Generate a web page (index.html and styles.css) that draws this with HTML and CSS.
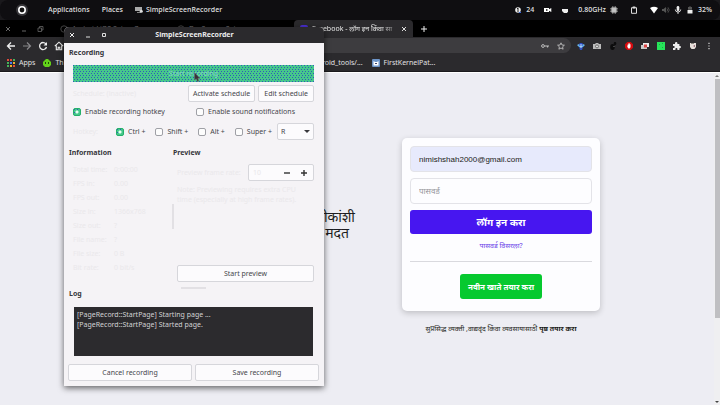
FILE: index.html
```
<!DOCTYPE html>
<html lang="mr">
<head>
<meta charset="utf-8">
<title>Facebook - लॉग इन किंवा साइन अप करा</title>
<link rel="stylesheet" href="styles.css">
</head>
<body>
<header class="panel" lang="en">
  <svg class="logo" viewBox="0 0 12 12"><circle cx="6" cy="6" r="6" fill="#38373b"/><circle cx="6" cy="6" r="3.2" fill="#111" stroke="#fff" stroke-width="1.6"/></svg>
  <span class="menu">Applications</span>
  <span class="menu">Places</span>
  <span class="menu running"><svg class="i8" viewBox="0 0 8 8"><path d="M0 1h7v4H0z" fill="#aaa"/><path d="M2 6h4v1H2z" fill="#888"/><circle cx="6.3" cy="5.3" r="1.5" fill="#ddd"/></svg>SimpleScreenRecorder</span>
  <div class="status">
    <svg class="i8" viewBox="0 0 8 8"><circle cx="4" cy="4" r="2.8" fill="#eee"/><path d="M4 2v4M3 3l1-1" stroke="#222"/><path d="M5 6h2v1H5z" fill="#3565e8"/></svg>
    <span class="count">24</span>
    <svg class="i8 cam" viewBox="0 0 8 8"><path d="M0 2h5v1.2L7.3 2v4L5 4.8V6H0z" fill="#fff"/><path d="M2 3.3h1.5v1.4H2z" fill="#111"/></svg>
    <svg class="i8 cup" viewBox="0 0 8 8"><path d="M1 3h6v2.5L6 7H3L1 5z" fill="#eee"/></svg>
    <span class="ghz">0.80GHz</span>
    <svg class="i8" viewBox="0 0 8 8"><path d="M1.4 1.4h5.2v5.2H1.4z" fill="#ccc"/><path d="M2.5 0v8M4 0v8M5.5 0v8M0 2.5h8M0 4h8M0 5.5h8" stroke="#bbb" stroke-width=".5"/></svg>
    <svg class="i8 clip" viewBox="0 0 8 8"><path d="M1.5 1.7h5v5.6h-5z" fill="none" stroke="#ddd"/><path d="M2.7.5h2.6v2H2.7z" fill="#ddd"/></svg>
    <svg class="i8 wifi" viewBox="0 0 8 8"><path d="M0 2Q4-.5 8 2L4 7.4z" fill="#fff"/></svg>
    <svg class="i8" viewBox="0 0 8 8"><path d="M0 3h1.5L4 1v6L1.500 5H0z" fill="#555"/><path d="M5 2.5q1.300 1.500 0 3M6 1.300q2.500 2.700 0 5.400" fill="none" stroke="#555" stroke-width=".8"/></svg>
    <svg class="i8 mic" viewBox="0 0 8 8"><rect x="2.700" y="0" width="2.600" height="5" rx="1.300" fill="#eee"/><path d="M1.300 3.500q0 2.500 2.700 2.500t2.700-2.500M4 6v2" fill="none" stroke="#eee" stroke-width=".9"/></svg>
    <svg class="i8" viewBox="0 0 8 8"><path d="M2 1h1V.4h2V1h1v2.700H2z" fill="#555"/><path d="M1.500 4h5v3.500h-5z" fill="#eee"/></svg>
    <span>32%</span>
  </div>
</header>

<nav class="tabs">
  <div class="wm">
    <svg class="i8" viewBox="0 0 8 8"><path d="M2 2l4 4M6 2l-4 4" stroke="#777" stroke-width=".9"/></svg>
    <svg class="i8" viewBox="0 0 8 8"><path d="M2 6h4" stroke="#666"/></svg>
    <svg class="i8" viewBox="0 0 8 8"><path d="M2 3h3.500v3.500H2zM3.500 3V1.500H7V5H5.500" fill="none" stroke="#666" stroke-width=".8"/></svg>
  </div>
  <div class="tab back"><svg class="i8" viewBox="0 0 8 8"><circle cx="4" cy="4" r="3.200" fill="none" stroke="#444"/></svg>Android iOS Setup Guru</div>
  <div class="tab back"><svg class="i8" viewBox="0 0 8 8"><circle cx="4" cy="4" r="3.200" fill="none" stroke="#444"/></svg>DevSource Setup</div>
  <div class="tab active"><svg class="i8" viewBox="0 0 8 8"><rect width="8" height="8" rx="2" fill="#4a2fd0"/></svg><span class="tabname">Facebook - लॉग इन किंवा सा</span>
    <button class="plain" aria-label="Close tab"><svg viewBox="0 0 6 6"><path d="M1 1l4 4M5 1L1 5" stroke="#ddd"/></svg></button></div>
  <button class="plain add" aria-label="New tab"><svg viewBox="0 0 6 6"><path d="M3 0v6M0 3h6" stroke="#eee"/></svg></button>
</nav>

<div class="toolbar">
  <button class="tool" aria-label="Back"><svg viewBox="0 0 10 10"><path d="M9 5H2M5 1.500L1.500 5 5 8.500" fill="none" stroke="#eee" stroke-width="1.300"/></svg></button>
  <button class="tool" aria-label="Forward"><svg viewBox="0 0 10 10"><path d="M1 5h7M5 1.500L8.500 5 5 8.500" fill="none" stroke="#88878a" stroke-width="1.200"/></svg></button>
  <button class="tool" aria-label="Reload"><svg viewBox="0 0 10 10"><path d="M8 3A3.500 3.500 0 1 0 8.500 6" fill="none" stroke="#eee" stroke-width="1.300"/><path d="M9 1v3.500H5.500z" fill="#eee"/></svg></button>
  <button class="tool" aria-label="Home"><svg viewBox="0 0 10 10"><path d="M.8 5.200L5 1.200l4.200 4M2.300 4.500v4.300h1.900V6.300h1.600v2.500h1.900V4.500" fill="none" stroke="#eee" stroke-width="1.100"/></svg></button>
  <div class="url">
    <svg class="i8" viewBox="0 0 8 8"><circle cx="2" cy="4" r="1.400" fill="none" stroke="#bbb"/><path d="M3.400 4H8M6.500 4v1.600" stroke="#bbb" stroke-width="1.200"/></svg>
    <svg class="i8" viewBox="0 0 8 8"><path d="M4 .8l1 2.200 2.400.2-1.800 1.600.5 2.400L4 6 1.900 7.200l.5-2.400L.6 3.200 3 3z" fill="none" stroke="#ccc" stroke-width=".8"/></svg>
  </div>
  <div class="ext">
    <svg class="i8" viewBox="0 0 8 8"><path d="M0 3l2-1 2 1 2-1 2 1-2 2H2z" fill="#68b5ec"/><path d="M2.500 1h3v3h-3z" fill="#2949c8"/><path d="M2 5h4L5 8H3z" fill="#3050bb"/><path d="M3.500 2h1v4h-1z" fill="#cfe8fa"/></svg>
    <svg class="i8" viewBox="0 0 8 8"><path d="M0 2h2l1-1h2l1 1h2v5H0z" fill="#bbb"/><circle cx="4" cy="4.400" r="1.500" fill="#ddd" stroke="#555" stroke-width=".8"/></svg>
    <svg class="i8" viewBox="0 0 8 8"><ellipse cx="3.500" cy="5" rx="2.300" ry="3" fill="#0c0c0d"/><ellipse cx="6" cy="1.600" rx="1.300" ry="1.700" fill="#0c0c0d"/><path d="M4 4h2v1H4z" fill="#444"/></svg>
    <svg class="i8" viewBox="0 0 8 8"><path d="M2.300 0h3.400L8 2.300v3.400L5.700 8H2.300L0 5.700V2.300z" fill="#d40b0f"/><path d="M2.700 2.500h.8V1.300h1.200v1h.8v3L4.700 6.500H3.300L2.300 4.700z" fill="#fff"/></svg>
    <svg class="i8" viewBox="0 0 8 8"><path d="M2 1h6v4H2z" fill="#eee"/><path d="M0 3h6v4H0z" fill="#ccc"/><path d="M3 2.500h3v3H3z" fill="#d44"/></svg>
    <svg class="i8" viewBox="0 0 8 8"><path d="M0 0h8v8H0z" fill="#27e45a"/><path d="M2 2h1v1H2zM5 5h1v1H5zM5 1h1v1H5z" fill="#18a840"/></svg>
    <svg class="i8" viewBox="0 0 8 8"><path d="M0 2h2V1.200a1.200 1.200 0 0 1 2.400 0V2h2v2h.5a1.100 1.100 0 0 1 0 2.200h-.5V8h-2V7a1 1 0 0 0-2 0v1H0V6h.7a1 1 0 0 0 0-2H0z" fill="#eee"/></svg>
    <svg class="i8" viewBox="0 0 8 8"><path d="M1 1h6v4L5.500 7h-3L1 5z" fill="#e6dfda"/><path d="M2 1h3v1H2z" fill="#86827d"/><path d="M4 4l2-1v2z" fill="#8a5a6a"/></svg>
    <svg class="i8" viewBox="0 0 8 8"><path d="M3.400.8h1.200V2H3.400zM3.400 3.400h1.200v1.200H3.400zM3.400 6h1.200v1.200H3.400z" fill="#ddd"/></svg>
  </div>
</div>

<div class="bookmarks" lang="en">
  <a href="#apps"><svg class="i8" viewBox="0 0 8 8"><path d="M0 0h2v2H0zM3 0h2v2H3z" fill="#e04a3c"/><path d="M6 0h2v2H6zM0 3h2v2H0z" fill="#45b35b"/><path d="M3 3h2v2H3z" fill="#4b7df0"/><path d="M6 3h2v2H6zM3 6h2v2H3z" fill="#f0b02c"/><path d="M0 6h2v2H0z" fill="#45b35b"/><path d="M6 6h2v2H6z" fill="#e04a3c"/></svg>Apps</a>
  <a href="#th" class="second"><svg class="i8" viewBox="0 0 8 8"><path d="M1 2l2-2h2l2 2 1 1v3L6 8H2L0 6V3z" fill="#63d21a"/><path d="M2 3h1v2H2zM5 3h1v2H5z" fill="#1c4a08"/></svg>Th</a>
  <div class="more">
    <a href="#tools">android_tools/...</a>
    <a href="#kernel"><svg class="i8" viewBox="0 0 8 8"><rect width="8" height="8" rx="1" fill="#6d95c8"/><path d="M1.500 2l1.500 1h2l1.500-1v4.500h-5z" fill="#fff"/><path d="M3 4h2v1H3z" fill="#446"/></svg>FirstKernelPat...</a>
  </div>
</div>

<main class="page">
  <p class="hero"><span>लोकांशी</span><span class="end">मदत</span></p>
  <div class="login">
    <form class="card">
      <input class="field filled" type="text" aria-label="ईमेल" value="nimishshah2000@gmail.com">
      <input class="field" type="password" aria-label="पासवर्ड" placeholder="पासवर्ड">
      <button class="signin" type="button">लॉग इन करा</button>
      <a class="forgot" href="#forgot">पासवर्ड विसरला?</a>
      <hr>
      <button class="create" type="button">नवीन खाते तयार करा</button>
    </form>
    <p class="foot">सुप्रसिद्ध व्यक्ती ,वाद्यवृंद किंवा व्यवसायासाठी <a href="#page">पृष्ठ तयार करा</a></p>
  </div>
  <div class="scroll"><svg viewBox="0 0 6 6"><path d="M1 4l2-2 2 2z" fill="#777"/></svg><i class="thumb"></i><svg viewBox="0 0 6 6"><path d="M1 2l2 2 2-2z" fill="#444"/></svg></div>
</main>

<section class="window" lang="en" aria-label="SimpleScreenRecorder">
  <div class="title">
    <button class="plain" aria-label="Close"><svg viewBox="0 0 6 6"><path d="M1 1l4 4M5 1L1 5" stroke="#eee"/></svg></button>
    <button class="plain" aria-label="Minimize"><svg viewBox="0 0 6 6"><path d="M1 5h4" stroke="#ddd"/></svg></button>
    <button class="plain" aria-label="Maximize"><svg viewBox="0 0 6 6"><path d="M1.500 1.500h3v3h-3z" fill="none" stroke="#ddd"/></svg></button>
    <strong>SimpleScreenRecorder</strong>
  </div>
  <div class="body">
    <h2>Recording</h2>
    <div class="inset">
      <button class="start dither">Start recording</button>
      <div class="row sched"><span class="faint grow">Schedule: (inactive)</span><button class="btn">Activate schedule</button><button class="btn wide">Edit schedule</button></div>
      <div class="row checks">
        <label class="half"><input type="checkbox" checked>Enable recording hotkey</label>
        <label><input type="checkbox">Enable sound notifications</label>
      </div>
      <div class="row keys">
        <span class="faint grow">Hotkey:</span>
        <label><input type="checkbox" checked>Ctrl +</label>
        <label><input type="checkbox">Shift +</label>
        <label><input type="checkbox">Alt +</label>
        <label><input type="checkbox">Super +</label>
        <span class="pick"><select aria-label="Key"><option>R</option></select></span>
      </div>
    </div>
    <div class="split">
      <div class="info">
        <h2>Information</h2>
        <dl class="faint">
          <dt>Total time:</dt><dd>0:00:00</dd>
          <dt>FPS in:</dt><dd>0.00</dd>
          <dt>FPS out:</dt><dd>0.00</dd>
          <dt>Size in:</dt><dd>1366x768</dd>
          <dt>Size out:</dt><dd>?</dd>
          <dt>File name:</dt><dd>?</dd>
          <dt>File size:</dt><dd>0 B</dd>
          <dt>Bit rate:</dt><dd>0 bit/s</dd>
        </dl>
      </div>
      <i class="grip"></i>
      <div class="preview">
        <h2>Preview</h2>
        <div class="pin">
          <div class="row"><label class="faint grow" for="rate">Preview frame rate:</label>
            <span class="spin"><input id="rate" type="text" value="10"><button class="plain" aria-label="Less"><svg viewBox="0 0 6 6"><path d="M0 3h6" stroke="#333" stroke-width="1.400"/></svg></button><button class="plain" aria-label="More"><svg viewBox="0 0 6 6"><path d="M3 0v6M0 3h6" stroke="#333" stroke-width="1.400"/></svg></button></span></div>
          <p class="faint note">Note: Previewing requires extra CPU<br>time (especially at high frame rates).</p>
          <button class="btn full">Start preview</button>
        </div>
      </div>
    </div>
    <i class="hgrip"></i>
    <h2>Log</h2>
    <div class="log">[PageRecord::StartPage] Starting page ...<br>[PageRecord::StartPage] Started page.</div>
    <div class="row foot-buttons"><button class="btn full">Cancel recording</button><button class="btn full">Save recording</button></div>
  </div>
  <svg class="pointer" viewBox="0 0 6 10"><path d="M.5.5v7.500l1.700-1.300L3.500 9.500l1.300-.7-1-2.500h2z" fill="#3b3338" stroke="#6d6a70" stroke-width=".5"/></svg>
</section>
</body>
</html>
```
FILE: styles.css
```
* { box-sizing: border-box; margin: 0; }
body {
  display: flex; flex-direction: column; height: 100vh; overflow: hidden; position: relative;
  font: 7px/10px "Noto Sans", "Open Sans", "Noto Sans Devanagari", sans-serif; color: #46464b; background: #000;
}
svg { display: block; flex: none; }
button, input, select { font: inherit; color: inherit; }
button { padding: 0; border: 0; background: none; }
a { color: inherit; text-decoration: none; }
.i8 { width: 8px; height: 8px; }
.plain svg { width: 6px; height: 6px; }

.panel {
  display: flex; align-items: center; height: 20px; padding: 0 8px 0 16px; flex: none;
  background: #0f0e11; color: #dededf; font-family: "Open Sans", sans-serif; font-weight: 600;
  border-radius: 8px; box-shadow: 0 0 0 8px #1a191c; clip-path: inset(0);
}
.logo { width: 12px; height: 12px; margin-right: 8px; }
.menu { margin-left: 12px; }
.running { display: flex; align-items: center; gap: 3px; }
.status { display: flex; align-items: center; gap: 4px; margin-left: auto; }
.cam { margin-left: 6px; }
.cup, .ghz { margin-left: 5px; }
.clip { margin-left: 8px; }
.wifi { margin-left: 8px; }

.tabs { display: flex; height: 17px; flex: none; align-items: center; background: #000; }
.wm { display: flex; gap: 8px; width: 60px; padding-left: 4px; flex: none; }
.tab { display: flex; align-items: center; gap: 4px; height: 17px; white-space: nowrap; }
.back { width: 117px; color: #77767a; }
.active { width: 119px; padding: 0 6px; background: #2b2a2d; color: #e6e6e6; border-radius: 4px 4px 0 0; }
.tabname { flex: 1; -webkit-mask-image: linear-gradient(90deg, #000 80%, #0004); mask-image: linear-gradient(90deg, #000 80%, #0004); }
.add { margin-left: 8px; }

.toolbar { display: flex; align-items: center; height: 17px; flex: none; gap: 6px; padding: 0 7px 0 6px; background: #2b2a2d; }
.tool svg { width: 10px; height: 10px; }
.url { display: flex; flex: 1; justify-content: flex-end; align-items: center; gap: 8px; height: 15px; padding-right: 6px; border-radius: 8px; background: #3d3c3f; }
.ext { display: flex; gap: 8px; }

.bookmarks { display: flex; align-items: center; height: 18px; flex: none; padding-left: 7px; background: #2b2a2d; color: #e2e2e3; border-bottom: 1px solid #1b1a1d; }
.bookmarks a { display: flex; align-items: center; gap: 4px; }
.bookmarks .second { margin-left: 8px; width: 266px; }
.more { display: flex; gap: 9px; }

.page { display: grid; grid-template-columns: 355fr 292fr 67fr 6px; flex: 1; background: #ededf3; border-top: 1px solid #fff; color: #1d1d20; }
.hero { display: flex; flex-direction: column; align-items: flex-end; padding-top: 136px; font-size: 14px; line-height: 16px; }
.end { padding-right: 6px; }
.login { padding: 65px 47px 0; }
.card { display: flex; flex-direction: column; padding: 8px; border-radius: 5px; background: #fdfdff; box-shadow: 0 2px 6px #0003; }
.field { width: 100%; min-width: 0; height: 26px; margin-bottom: 6px; padding: 0 8px; border: 1px solid #e3e3e8; border-radius: 4px; background: #fdfdff; font: 8px "Liberation Sans", "Noto Sans Devanagari", sans-serif; color: #222; }
.field::placeholder { color: #96969b; }
.filled { background: #e7eafc; }
.signin { height: 24px; border-radius: 3px; background: #4716f0; color: #fff; font-size: 10px; font-weight: 700; }
.forgot { align-self: center; margin-top: 7px; color: #6a3ee8; }
hr { border: 0; border-top: 1px solid #d9d9de; margin: 10px 0 12px; }
.create { align-self: center; height: 25px; padding: 0 8px; margin-bottom: 4px; border-radius: 3px; background: #06c92f; color: #fff; font-size: 8px; font-weight: 700; }
.foot { margin: 13px -20px 0; text-align: center; white-space: nowrap; }
.foot a { font-weight: 700; }
.scroll { grid-column: 4; display: flex; flex-direction: column; align-items: center; background: #efeff1; }
.scroll svg { width: 6px; height: 6px; }
.thumb { width: 5px; height: 72%; margin-bottom: auto; background: #bfbfc2; }

.window { position: absolute; left: 64px; top: 27px; width: 260px; background: #f5f3f6; border-radius: 5px 5px 0 0; box-shadow: 0 2px 6px #0009; }
.title { display: flex; align-items: center; gap: 10px; height: 16px; padding-left: 5px; border-radius: 5px 5px 0 0; background: #2b2a2d; color: #ececec; }
.title strong { flex: 1; padding-right: 52px; text-align: center; }
.body { padding: 5px 5px 5px 4px; }
h2 { font-size: 7px; line-height: 10px; color: #36363b; }
.body > h2, .info h2 { padding-left: 1px; }
.faint { color: #eae8eb; }
.inset { padding: 7px 5px 0; }
.start { display: block; width: 100%; height: 17px; color: #84d8c4; }
.dither, input[type=checkbox]:checked {
  background-color: #46c98b;
  background-image:
    conic-gradient(from 270deg at 1px 1px, #2f5cb8 90deg, transparent 0),
    conic-gradient(from 270deg at 1px 1px, #2f5cb8 90deg, transparent 0);
  background-size: 3px 4px; background-position: 0 0, 1px 2px;
}
.row { display: flex; align-items: center; gap: 3px; white-space: nowrap; }
.grow { flex: 1; }
.btn { height: 17px; padding: 0 4px; border: 1px solid #d6d6db; border-radius: 2px; background: #fcfbfd; }
.wide { padding: 0 5px; }
.full { flex: 1; width: 100%; }
.sched { margin-top: 3px; }
.checks { margin-top: 5px; gap: 0; }
label { display: flex; align-items: center; gap: 4px; }
.half { width: 123px; }
input[type=checkbox] { appearance: none; width: 8px; height: 8px; border: 1px solid #9fa0a6; border-radius: 2px; background-color: #fdfdfd; }
input[type=checkbox]:checked {
  border-color: #25b06a;
  background-image: radial-gradient(circle, #e8fff2 0 1px, transparent 2px), conic-gradient(from 270deg at 1px 1px, #2f5cb8 90deg, transparent 0);
  background-size: 100% 100%, 3px 3px; background-position: 0 0;
}
.keys { margin-top: 6px; gap: 10px; }
.pick { position: relative; margin-left: -5px; }
.pick::after { content: ""; position: absolute; right: 4px; top: 7px; border: 3px solid transparent; border-top-color: #38383c; }
select { display: block; appearance: none; width: 37px; height: 17px; padding: 0 3px; border: 1px solid #d6d6db; border-radius: 2px; background: #fcfbfd; }
.split { display: flex; margin-top: 8px; }
.info { width: 104px; }
dl { display: grid; grid-template-columns: 41px 1fr; grid-auto-rows: 14px; padding: 7px 0 0 5px; }
dd { margin: 0; }
.grip { width: 2px; height: 25px; margin: 56px -1px 0 0; background: #e2e0e4; }
.preview { flex: 1; }
.pin { display: flex; flex-direction: column; height: 124px; padding: 6px 5px 0 4px; }
.pin .full { flex: none; margin-top: auto; }
.spin { display: flex; align-items: center; gap: 11px; width: 66px; height: 17px; padding: 0 6px 0 4px; border: 1px solid #d6d6db; border-radius: 2px; background: #fcfbfd; }
.spin input { flex: 1; min-width: 0; padding: 0; border: 0; background: none; color: #e9e7ea; }
.note { margin-top: 4px; white-space: nowrap; }
.hgrip { display: block; width: 25px; height: 2px; margin: 5px auto 0; background: #e2e0e4; }
.log { height: 49px; margin: 8px 6px 8px; padding: 3px; background: #2c2b2e; color: #d2d2d4; }
.pointer { position: absolute; left: 130px; top: 45px; width: 6px; height: 10px; }
```
